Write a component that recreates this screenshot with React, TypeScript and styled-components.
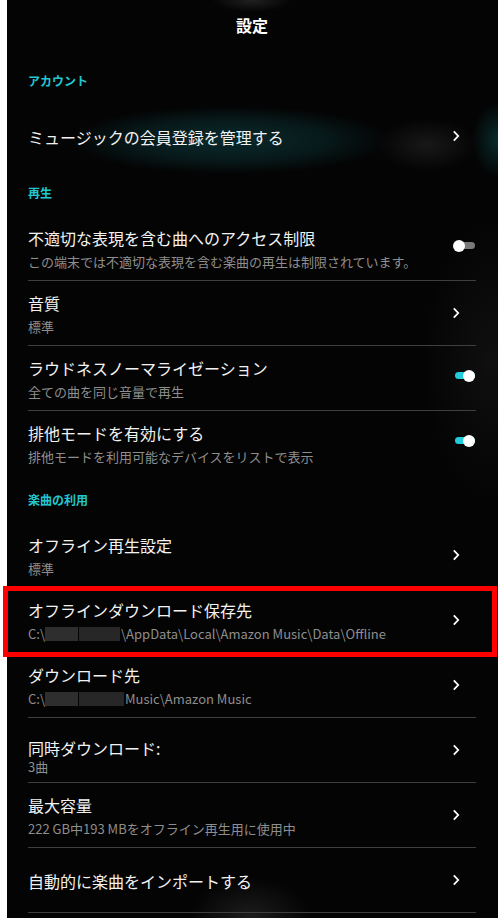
import React from "react";
import styled, { createGlobalStyle } from "styled-components";

const GlobalStyle = createGlobalStyle`
  html, body {
    margin: 0;
    background: #fff;
    overflow: hidden;
  }

  body {
    font-family: "Noto Sans CJK JP", "Noto Sans", sans-serif;
  }
`;

const Panel = styled.main`
  margin: 0 5px 0 7px;
  min-height: 918px;
  padding: 0 22px 0 21px;
  box-sizing: border-box;
  color: #f0f0f0;
  background:
    radial-gradient(ellipse 160px 34px at 222px 140px, rgba(11, 46, 48, 0.9), rgba(11, 46, 48, 0.5) 60%, transparent 100%),
    radial-gradient(ellipse 50px 26px at 420px 145px, rgba(28, 28, 28, 0.85), transparent 100%),
    radial-gradient(ellipse 26px 38px at 491px 140px, rgba(10, 50, 52, 0.85), transparent 100%),
    radial-gradient(ellipse 40px 12px at 245px 0px, rgba(45, 45, 45, 0.7), transparent 100%),
    radial-gradient(ellipse 60px 40px at 243px 918px, rgba(45, 45, 45, 0.6), transparent 100%),
    radial-gradient(ellipse 70px 140px at 485px 360px, rgba(20, 20, 20, 0.7), transparent 100%),
    #040404;
`;

const TitleBar = styled.header`
  height: 57px;
  display: flex;
  justify-content: center;
  align-items: flex-start;
  padding-top: 14px;
  box-sizing: border-box;

  h1 {
    margin: 0;
    font-size: 16px;
    line-height: 22px;
    font-weight: 700;
    color: #fff;
  }
`;

const Section = styled.section<{ $open?: boolean }>`
  & > div:last-child {
    border-bottom-color: ${({ $open }) => ($open ? "#3f3f3f" : "transparent")};
  }
`;

const SectionLabel = styled.h2`
  margin: 0;
  height: 47px;
  display: flex;
  align-items: center;
  font-size: 12px;
  font-weight: 700;
  color: #22c7d2;
`;

const Row = styled.div`
  position: relative;
  height: 65px;
  box-sizing: border-box;
  border-bottom: 1px solid #3f3f3f;
  display: flex;
  align-items: center;
  justify-content: space-between;
`;

const TextBlock = styled.div<{ $compact?: boolean }>`
  display: flex;
  flex-direction: column;
  margin-top: ${({ $compact }) => ($compact ? "13px" : "2px")};
`;

const Title = styled.span<{ $compact?: boolean }>`
  font-size: 16px;
  line-height: ${({ $compact }) => ($compact ? "16px" : "22px")};
  color: #f2f2f2;
  white-space: nowrap;
`;

const Sub = styled.span<{ $compact?: boolean }>`
  font-size: 13px;
  line-height: ${({ $compact }) => ($compact ? "13px" : "18px")};
  margin-top: 4px;
  color: #8e8e8e;
  white-space: nowrap;
`;

const Redacted = styled.span<{ $w: number; $shade: string }>`
  display: inline-block;
  width: ${({ $w }) => $w}px;
  height: 14px;
  margin-right: 1px;
  vertical-align: -2px;
  background: ${({ $shade }) => $shade};
`;

const Chevron = styled.svg`
  width: 8px;
  height: 12px;
  margin-right: 16px;
  flex-shrink: 0;
`;

const Toggle = styled.span<{ $on?: boolean }>`
  position: relative;
  width: 22px;
  height: 12px;
  margin: 0 1px 5px 0;
  flex-shrink: 0;

  &::before {
    content: "";
    position: absolute;
    left: 2px;
    right: 0;
    top: 2.5px;
    height: 7px;
    border-radius: 4px;
    background: ${({ $on }) => ($on ? "#22ccd8" : "#7a7a7a")};
  }

  &::after {
    content: "";
    position: absolute;
    top: 0;
    left: ${({ $on }) => ($on ? "10px" : "0")};
    width: 12px;
    height: 12px;
    border-radius: 50%;
    background: #fff;
  }
`;

const Highlight = styled.span`
  position: absolute;
  top: -2px;
  bottom: -5px;
  left: -25px;
  right: -21px;
  border: 5px solid #ff0000;
  pointer-events: none;
`;

const Arrow = () => (
  <Chevron viewBox="0 0 8 12">
    <path d="M1.8 1.4 L6.2 6 L1.8 10.6" fill="none" stroke="#fff" strokeWidth="1.8" />
  </Chevron>
);

type Item = {
  title: string;
  sub?: React.ReactNode;
  toggle?: "on" | "off";
  compact?: boolean;
  highlight?: boolean;
};

const SettingRow = ({ title, sub, toggle, compact, highlight }: Item) => (
  <Row>
    <TextBlock $compact={compact}>
      <Title $compact={compact}>{title}</Title>
      {sub && <Sub $compact={compact}>{sub}</Sub>}
    </TextBlock>
    {toggle ? <Toggle $on={toggle === "on"} /> : <Arrow />}
    {highlight && <Highlight />}
  </Row>
);

const App = () => {
  return (
    <>
      <GlobalStyle />
      <Panel>
        <TitleBar>
          <h1>設定</h1>
        </TitleBar>

        <Section>
          <SectionLabel>アカウント</SectionLabel>
          <SettingRow title="ミュージックの会員登録を管理する" />
        </Section>

        <Section>
          <SectionLabel>再生</SectionLabel>
          <SettingRow
            title="不適切な表現を含む曲へのアクセス制限"
            sub="この端末では不適切な表現を含む楽曲の再生は制限されています。"
            toggle="off"
          />
          <SettingRow title="音質" sub="標準" />
          <SettingRow
            title="ラウドネスノーマライゼーション"
            sub="全ての曲を同じ音量で再生"
            toggle="on"
          />
          <SettingRow
            title="排他モードを有効にする"
            sub="排他モードを利用可能なデバイスをリストで表示"
            toggle="on"
          />
        </Section>

        <Section $open>
          <SectionLabel>楽曲の利用</SectionLabel>
          <SettingRow title="オフライン再生設定" sub="標準" />
          <SettingRow
            title="オフラインダウンロード保存先"
            sub={
              <>
                C:\
                <Redacted $w={33} $shade="#2e2e2e" />
                <Redacted $w={41} $shade="#272727" />
                \AppData\Local\Amazon Music\Data\Offline
              </>
            }
            highlight
          />
          <SettingRow
            title="ダウンロード先"
            sub={
              <>
                C:\
                <Redacted $w={33} $shade="#2e2e2e" />
                <Redacted $w={45} $shade="#272727" />
                Music\Amazon Music
              </>
            }
          />
          <SettingRow title="同時ダウンロード:" sub="3曲" compact />
          <SettingRow title="最大容量" sub="222 GB中193 MBをオフライン再生用に使用中" />
          <SettingRow title="自動的に楽曲をインポートする" />
        </Section>
      </Panel>
    </>
  );
};

export default App;
